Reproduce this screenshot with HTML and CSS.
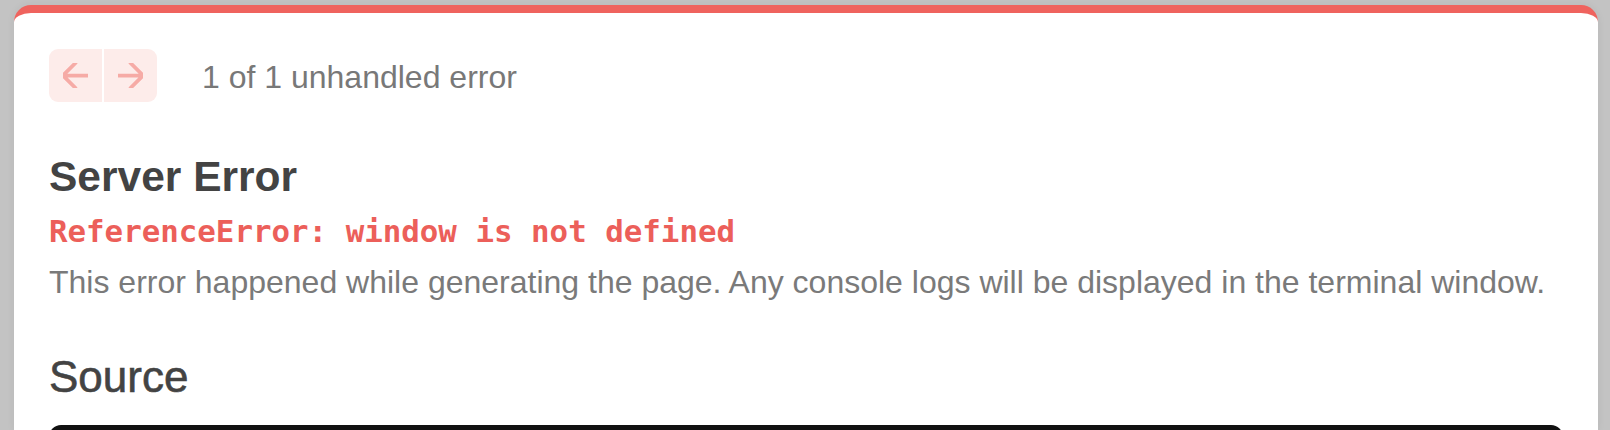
FILE: index.html
```html
<!DOCTYPE html>
<html lang="en">
<head>
<meta charset="utf-8">
<title>Unhandled Runtime Error</title>
<link rel="stylesheet" href="styles.css">
</head>
<body>
  <div class="overlay">
    <div class="dialog">
      <div class="nav-row">
        <div class="nav-group">
          <button class="nav-btn nav-prev" aria-label="Previous">
            <svg viewBox="5 5 14 14" width="25" height="25" fill="none" stroke="currentColor" stroke-width="2.1" stroke-linecap="round" stroke-linejoin="round"><path d="M19 12H5M12 19l-7-7 7-7"/></svg>
          </button>
          <button class="nav-btn nav-next" aria-label="Next">
            <svg viewBox="5 5 14 14" width="25" height="25" fill="none" stroke="currentColor" stroke-width="2.1" stroke-linecap="round" stroke-linejoin="round"><path d="M5 12h14M12 5l7 7-7 7"/></svg>
          </button>
        </div>
        <span class="nav-text">1 of 1 unhandled error</span>
      </div>
      <h1 class="title">Server Error</h1>
      <p class="error-msg">ReferenceError: window is not defined</p>
      <p class="desc">This error happened while generating the page. Any console logs will be displayed in the terminal window.</p>
      <h2 class="section">Source</h2>
      <div class="code-block"></div>
    </div>
  </div>
</body>
</html>
```
FILE: styles.css
```css
html, body {
  margin: 0;
  padding: 0;
  height: 100%;
  overflow: hidden;
}
body {
  background: #c3c3c3;
  font-family: "Liberation Sans", Arial, sans-serif;
}
.overlay {
  padding: 5px 12px 0 14px;
}
.dialog {
  background: #ffffff;
  border-top: 8px solid #ef635e;
  border-radius: 17px 17px 0 0;
  padding: 36px 35px 0 35px;
  box-shadow: 0 0 8px rgba(0, 0, 0, 0.06);
  height: 425px;
  box-sizing: border-box;
  overflow: hidden;
}
.nav-row {
  display: flex;
  align-items: center;
  gap: 45px;
}
.nav-group {
  display: flex;
  gap: 2px;
}
.nav-btn {
  width: 53px;
  height: 53px;
  border: none;
  padding: 0;
  margin: 0;
  background: #fdecea;
  color: #f6aba6;
  display: flex;
  align-items: center;
  justify-content: center;
}
.nav-prev {
  border-radius: 9px 0 0 9px;
}
.nav-next {
  border-radius: 0 9px 9px 0;
}
.nav-text {
  padding-top: 4px;
  font-size: 32px;
  color: #787878;
}
.title {
  margin: 50px 0 0 0;
  font-size: 42.5px;
  line-height: 50px;
  font-weight: 700;
  color: #434343;
}
.error-msg {
  margin: 10px 0 0 0;
  font-family: "DejaVu Sans Mono", "Liberation Mono", monospace;
  font-weight: 700;
  font-size: 30.8px;
  line-height: 38px;
  color: #ec5f5a;
}
.desc {
  margin: 13px 0 0 0;
  font-size: 32px;
  line-height: 38px;
  color: #7a7a7a;
}
.section {
  margin: 49px 0 0 0;
  font-size: 44px;
  line-height: 53px;
  font-weight: 400;
  -webkit-text-stroke: 0.6px #434343;
  color: #434343;
}
.code-block {
  margin-top: 22px;
  height: 60px;
  background: #111111;
  border-radius: 12px 12px 0 0;
}
```
